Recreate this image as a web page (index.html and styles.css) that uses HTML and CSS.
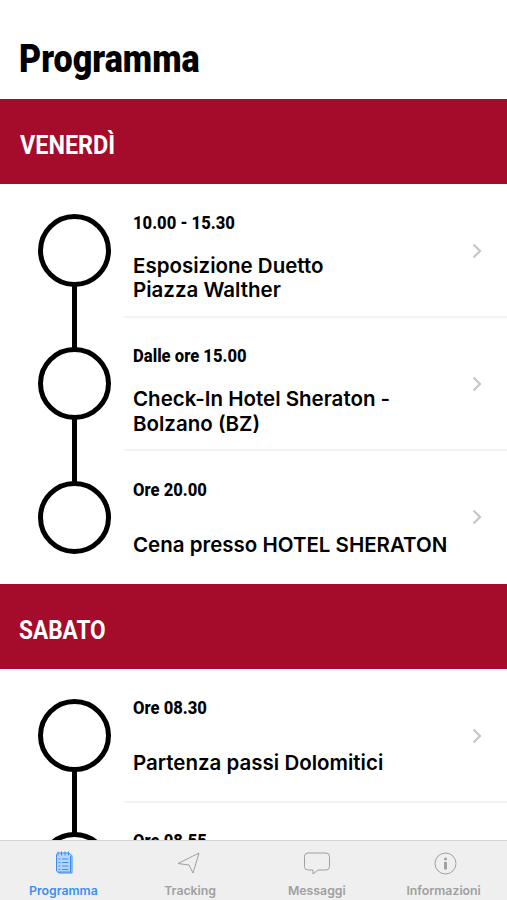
FILE: index.html
```html
<!DOCTYPE html>
<html lang="it">
<head>
    <meta charset="UTF-8">
    <meta name="viewport" content="width=device-width, initial-scale=1">
    <title>Programma</title>
    <link rel="stylesheet" href="styles.css">
</head>
<body>
    <header class="header">
        <h1>Programma</h1>
    </header>

    <main class="content">
        <h2 class="day"><span>VENERDÌ</span></h2>
        <ul class="events">
            <li class="event">
                <div class="step"></div>
                <div class="info">
                    <div class="text">
                        <p class="time">10.00 - 15.30</p>
                        <p class="title">Esposizione Duetto<br>Piazza Walther</p>
                    </div>
                    <svg class="chevron" width="10" height="16" viewBox="0 0 10 16"><path d="M1.5 1.5 8 8l-6.500 6.500"/></svg>
                </div>
            </li>
            <li class="event">
                <div class="step"></div>
                <div class="info">
                    <div class="text">
                        <p class="time">Dalle ore 15.00</p>
                        <p class="title">Check-In Hotel Sheraton -<br>Bolzano (BZ)</p>
                    </div>
                    <svg class="chevron" width="10" height="16" viewBox="0 0 10 16"><path d="M1.5 1.5 8 8l-6.500 6.500"/></svg>
                </div>
            </li>
            <li class="event">
                <div class="step"></div>
                <div class="info">
                    <div class="text">
                        <p class="time">Ore 20.00</p>
                        <p class="title">Cena presso HOTEL SHERATON</p>
                    </div>
                    <svg class="chevron" width="10" height="16" viewBox="0 0 10 16"><path d="M1.5 1.5 8 8l-6.500 6.500"/></svg>
                </div>
            </li>
        </ul>

        <h2 class="day sabato"><span>SABATO</span></h2>
        <ul class="events">
            <li class="event">
                <div class="step"></div>
                <div class="info">
                    <div class="text">
                        <p class="time">Ore 08.30</p>
                        <p class="title">Partenza passi Dolomitici</p>
                    </div>
                    <svg class="chevron" width="10" height="16" viewBox="0 0 10 16"><path d="M1.5 1.5 8 8l-6.500 6.500"/></svg>
                </div>
            </li>
            <li class="event">
                <div class="step"></div>
                <div class="info">
                    <div class="text">
                        <p class="time">Ore 08.55</p>
                    </div>
                </div>
            </li>
        </ul>
    </main>

    <nav class="tabbar">
        <a class="tab active">
            <svg width="26" height="26" viewBox="0 0 26 26">
                <path class="pad" d="M6.500 4.500 8 3h10.500L22 5.500V23H9l-2.500-2z"/>
                <path d="M8 1.500v4M11.500 1.500v4M15 1.500v4M18.500 1.500v4M20.500 6v16H8"/>
                <path d="M8.500 9h2M12 9h6.500M8.500 12.500h2M12 12.500h6.500M8.500 16h2M12 16h6.500M8.500 19.500h2M12 19.500h6.500"/>
            </svg>
            <span>Programma</span>
        </a>
        <a class="tab">
            <svg width="26" height="26" viewBox="0 0 26 26">
                <path d="M22 3 1 13.500l11 1.500 4 8z"/>
            </svg>
            <span>Tracking</span>
        </a>
        <a class="tab">
            <svg width="26" height="26" viewBox="0 0 26 26">
                <path d="M4 3h18a3.500 3.500 0 0 1 3.500 3.500v10A3.500 3.500 0 0 1 22 20h-8l-5 4v-4H4a3.500 3.500 0 0 1-3.500-3.500v-10A3.500 3.500 0 0 1 4 3z"/>
            </svg>
            <span>Messaggi</span>
        </a>
        <a class="tab">
            <svg width="26" height="26" viewBox="0 0 26 26">
                <circle cx="14.500" cy="13.500" r="10.500"/>
                <circle class="fill" cx="14.500" cy="9" r="1.500"/>
                <path class="fill" d="M13 12h3v7.500h-3z"/>
            </svg>
            <span>Informazioni</span>
        </a>
    </nav>
</body>
</html>
```
FILE: styles.css
```css
*, *::before, *::after {
    box-sizing: border-box;
}
body {
    margin: 0;
    height: 100vh;
    display: flex;
    flex-direction: column;
    overflow: hidden;
    background: #fff;
    color: #000;
    font-family: Inter, sans-serif;
}
h1, h2, p, ul {
    margin: 0;
    padding: 0;
}
/* Titoli leggermente condensati */
h1, .day span, .time {
    font-family: Roboto, sans-serif;
    transform-origin: left center;
}
.header {
    flex: none;
    height: 99px;
    padding: 33px 19px 0;
}
h1 {
    font-weight: 900;
    font-size: 38.500px;
    line-height: 52px;
    transform: scaleX(0.885);
}
.content {
    flex: 1;
    min-height: 0;
    overflow: hidden;
}
.day {
    display: flex;
    align-items: center;
    height: 85px;
    padding: 6px 20px 0;
    background: #a50b2b;
    color: #fff;
}
.day span {
    font-weight: 700;
    font-size: 26px;
    line-height: 32px;
    transform: scaleX(0.9);
}
.sabato {
    padding: 8px 19px 0;
}
.sabato span {
    transform: scaleX(0.87);
}
.events {
    list-style: none;
}
.event {
    display: flex;
    height: 133.300px;
}
.event:last-child {
    height: 133.400px;
}
/* Cerchio con la linea verso la tappa successiva */
.step {
    flex: none;
    width: 124px;
    padding: 30px 0 0 38px;
}
.step::before {
    content: "";
    display: block;
    width: 73px;
    height: 73px;
    border: 5px solid #000;
    border-radius: 50%;
}
.step::after {
    content: "";
    display: block;
    width: 5px;
    height: 63px;
    margin: -1px 0 0 34px;
    background: #000;
}
.event:last-child .step::after {
    display: none;
}
.info {
    flex: 1;
    display: flex;
    align-items: center;
    margin-bottom: -0.700px;
    padding: 0 25px 0 9px;
    border-bottom: 2px solid #f3f3f3;
}
.event:last-child .info {
    border-bottom-color: transparent;
}
.text {
    flex: 1;
    align-self: stretch;
    display: flex;
    flex-direction: column;
    padding-top: 27px;
    white-space: nowrap;
}
.time {
    font-weight: 800;
    font-size: 17.800px;
    line-height: 24px;
    transform: scaleX(0.935);
}
.title {
    flex: 1;
    display: flex;
    align-items: center;
    padding-top: 6px;
    font-weight: 600;
    font-size: 20.500px;
    line-height: 24.500px;
}
.chevron {
    margin-top: 1.500px;
    fill: none;
    stroke: #c7c7cc;
    stroke-width: 2.300;
}
.tabbar {
    flex: none;
    display: flex;
    height: 60px;
    background: #efefef;
    border-top: 1px solid #d4d4d4;
}
.tab {
    flex: 1;
    display: flex;
    flex-direction: column;
    align-items: center;
    padding-top: 9px;
    color: #a0a0a0;
    font-size: 12.300px;
    font-weight: 600;
    line-height: 16px;
}
.tab span {
    margin-top: 7px;
}
.tab svg {
    fill: none;
    stroke: currentColor;
    stroke-width: 1;
}
.tab .fill {
    fill: currentColor;
    stroke: none;
}
.tab .pad {
    fill: #b5d6fa;
}
.active {
    color: #3a8ff5;
}
```
